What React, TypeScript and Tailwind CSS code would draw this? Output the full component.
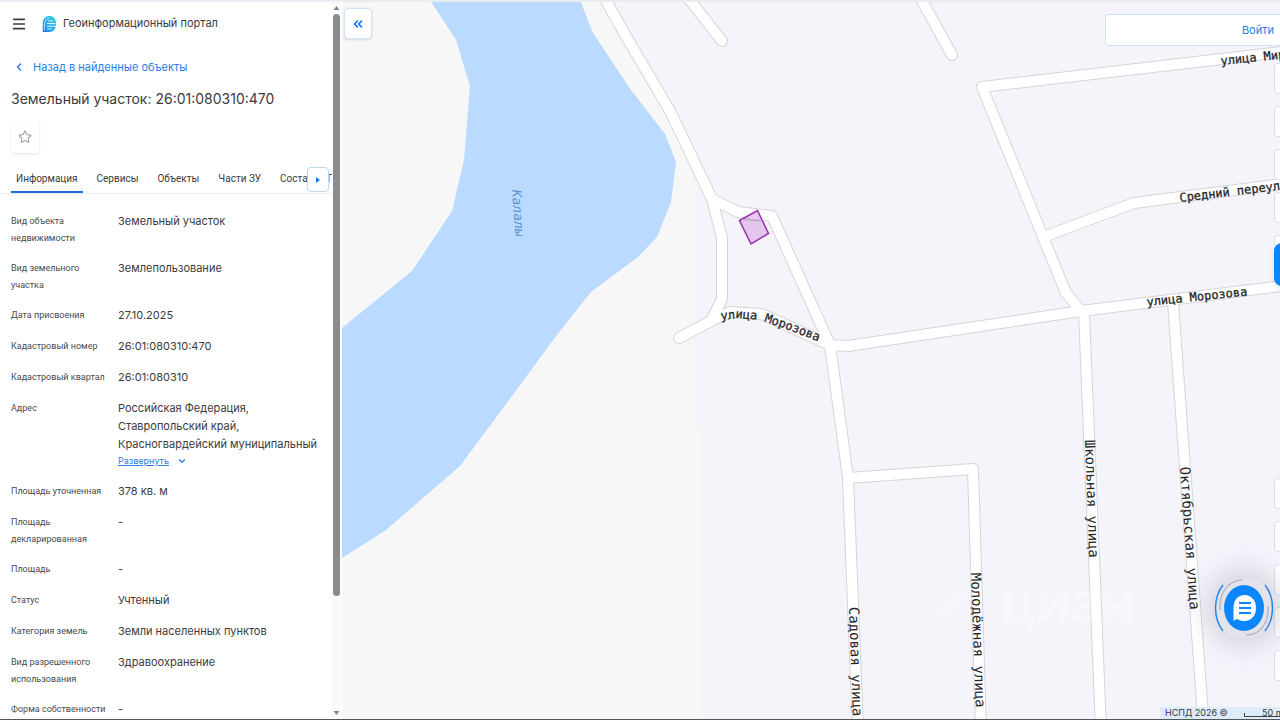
import { ChevronDown, ChevronLeft, ChevronsLeft, Menu, Star } from "lucide-react";

type Field = { label: string; value: string; expandable?: boolean };

const fields: Field[] = [
  { label: "Вид объекта недвижимости", value: "Земельный участок" },
  { label: "Вид земельного участка", value: "Землепользование" },
  { label: "Дата присвоения", value: "27.10.2025" },
  { label: "Кадастровый номер", value: "26:01:080310:470" },
  { label: "Кадастровый квартал", value: "26:01:080310" },
  {
    label: "Адрес",
    value: "Российская Федерация, Ставропольский край, Красногвардейский муниципальный",
    expandable: true,
  },
  { label: "Площадь уточненная", value: "378 кв. м" },
  { label: "Площадь декларированная", value: "-" },
  { label: "Площадь", value: "-" },
  { label: "Статус", value: "Учтенный" },
  { label: "Категория земель", value: "Земли населенных пунктов" },
  { label: "Вид разрешенного использования", value: "Здравоохранение" },
  { label: "Форма собственности", value: "-" },
];

const tabs = ["Информация", "Сервисы", "Объекты", "Части ЗУ", "Состав ЕЗП"];

const roads = [
  "M600 -10 L627 38 L670 111 L712 199 L738 212 L772 216 L830 345 L848 346 L1081 311 L1290 285",
  "M712 199 L722 238 V299 L711 321 L679 338",
  "M711 321 L730 312 L762 314 L830 345",
  "M685 -6 L722 41",
  "M916 -10 L952 55",
  "M1290 51 L982 87 L1043 237 L1066 293 L1081 311",
  "M1043 237 L1134 203 L1290 183",
  "M830 345 L848 478 L858 730",
  "M848 478 L973 469 L981 730",
  "M1084 312 L1101 730",
  "M1173 302 L1204 730",
];

function Logo() {
  return (
    <svg viewBox="0 0 16 18" className="h-4 w-4" aria-hidden="true">
      <defs>
        <linearGradient id="logo" x1="1" y1="0" x2="0" y2="1">
          <stop offset="0" stopColor="#35e0d6" />
          <stop offset="1" stopColor="#1479ff" />
        </linearGradient>
      </defs>
      <path d="M1 18 V8 C1 3 4.500 0 9 0 C13 0 16 3.500 16 9 C16 14.500 13 18 8 18 Z" fill="url(#logo)" />
      <path d="M3 16 V8.500 C3 5 5 3 8 2.500" fill="none" stroke="#ffffff" strokeWidth="0.800" />
      <path d="M6.500 5.500 H12 M5.500 8.500 H15 M5.500 11.500 H16 M6 14.500 H11" stroke="#ffffff" strokeWidth="1" />
    </svg>
  );
}

function MapCanvas() {
  return (
    <svg
      viewBox="342 2 938 717"
      preserveAspectRatio="xMinYMin slice"
      className="absolute inset-0 h-full w-full"
      role="img"
      aria-label="Карта"
    >
      <rect x="342" y="0" width="938" height="720" fill="#f5f4fb" />
      <path d="M342 0 H600 L627 38 L670 111 L693 170 V380 L700 440 V720 H342 Z" fill="#f7f7f7" />
      <path
        d="M430 0 L456 40 L470 86 L464 160 L452 211 L412 271 L342 328 V558 L386 530 L460 466 L512 396 L556 336 L591 292 L638 257 L657 237 L671 202 L676 162 L665 134 L628 86 L592 31 L580 0 Z"
        fill="#bbdaff"
      />
      <g fill="none" stroke="#d5d5d8" strokeWidth="12" strokeLinecap="round" strokeLinejoin="round">
        {roads.map((d) => (
          <path key={d} d={d} />
        ))}
      </g>
      <g fill="none" stroke="#ffffff" strokeWidth="10" strokeLinecap="round" strokeLinejoin="round">
        {roads.map((d) => (
          <path key={d} d={d} />
        ))}
      </g>
      <path
        d="M739.500 220.500 L757.500 210.500 L768.500 233.500 L751 244 Z"
        fill="#d08cdc"
        fillOpacity="0.45"
        stroke="#9b2fae"
        strokeWidth="1.500"
      />
      <path d="M742 219.500 L762 221" stroke="#b9a3c0" strokeWidth="1" />
      <defs>
        <path id="morozova-west" d="M721 320 L738 318 L760 320 L792 331 L840 350" />
      </defs>
      <g className="font-['DejaVu_Sans_Mono',monospace] text-[12px]" fill="#26262a" stroke="#26262a" strokeWidth="0.300">
        <text>
          <textPath href="#morozova-west">улица Морозова</textPath>
        </text>
        <text transform="translate(1147 306) rotate(-6)">улица Морозова</text>
        <text transform="translate(1180 202) rotate(-7)">Средний переулок</text>
        <text transform="translate(1221 65) rotate(-6)">улица Мира</text>
      </g>
      <g className="font-['DejaVu_Sans_Mono',monospace] text-[14px]" fill="#26262a">
        <text transform="translate(849 607) rotate(88)">Садовая улица</text>
        <text transform="translate(971 573) rotate(88)">Молодёжная улица</text>
        <text transform="translate(1085 440) rotate(88)">Школьная улица</text>
        <text transform="translate(1180 467) rotate(86)">Октябрьская улица</text>
      </g>
      <text
        transform="translate(512 190) rotate(86)"
        fill="#5c94d2"
        className="font-['DejaVu_Sans_Mono',monospace] text-[13px] italic"
      >
        Калалы
      </text>
      <g fill="#ffffff" fillOpacity="0.3">
        <path d="M936 618 L962 590 L970 590 L944 618 Z" />
        <text x="1000" y="622" className="font-['Inter',sans-serif] text-[56px] font-semibold">
          циан
        </text>
      </g>
    </svg>
  );
}

function ChatIcon() {
  return (
    <svg viewBox="0 0 60 60" className="h-[60px] w-[60px]" aria-hidden="true">
      <ellipse cx="30" cy="30" rx="20" ry="23" fill="#0a87ff" />
      <path
        d="M19.500 43 V30 C19.500 22 24 17 30.500 17 C37.500 17 42 22.500 42 30 C42 37.500 37.500 43 30.500 43 C28 43 26 42.500 24.500 41.500 C23 41 21 41.500 19.500 43 Z"
        fill="#ffffff"
      />
      <path d="M25 25 H37 M25 30 H37 M25 35 H37" stroke="#0a87ff" strokeWidth="2" />
      <g fill="none" strokeWidth="1.500">
        <path d="M9 7 C-1 20 -1 40 9 53 M51 7 C61 20 61 40 51 53" stroke="#2587ee" />
        <path d="M6 32 C5 14 14 3 28 2 M54 28 C55 46 46 57 32 57" stroke="#b9b9c0" />
      </g>
    </svg>
  );
}

function ToolButton({ label }: { label: string }) {
  return (
    <button type="button" aria-label={label} className="h-[31px] w-10 rounded-sm border border-[#cfe2f7] bg-white" />
  );
}

export default function App() {
  return (
    <div className="flex h-screen flex-col overflow-hidden border-t-2 border-b border-t-[#e9ecf0] border-b-[#55565a] bg-white font-['Inter',sans-serif] text-[#3b3b3d]">
      <div className="flex min-h-0 flex-1">
        <aside className="flex w-[342px] shrink-0 pr-px">
          <div className="flex min-w-0 flex-1 flex-col overflow-hidden">
            <header className="flex h-[43px] shrink-0 items-center pl-[11px]">
              <button type="button" aria-label="Меню">
                <Menu className="h-4 w-4" strokeWidth={2.5} />
              </button>
              <a href="#home" className="ml-3.5 flex items-center gap-1.5 text-[11px]">
                <Logo />
                Геоинформационный портал
              </a>
            </header>
            <a
              href="#results"
              className="mt-3 flex shrink-0 items-center gap-2 pl-[13px] text-[11px] leading-5 text-[#2a7de8]"
            >
              <ChevronLeft className="h-3 w-3" strokeWidth={3} />
              Назад в найденные объекты
            </a>
            <h1 className="mt-3 shrink-0 pl-[11px] text-[14px] leading-5">Земельный участок: 26:01:080310:470</h1>
            <button
              type="button"
              aria-label="В избранное"
              className="mt-3 ml-[11px] flex h-8 w-7 shrink-0 items-center justify-center rounded-sm text-[#a3a3a6] shadow-[0_1px_3px_rgba(0,0,0,0.12)]"
            >
              <Star className="h-3.5 w-3.5" strokeWidth={2} />
            </button>
            <div className="relative mt-2 shrink-0">
              <div
                role="tablist"
                className="flex h-[33px] gap-[9px] overflow-hidden border-b border-[#ececee] pl-[11px] font-['Roboto',sans-serif] text-[10px]"
              >
                {tabs.map((tab, i) => (
                  <button
                    key={tab}
                    type="button"
                    role="tab"
                    aria-selected={i === 0}
                    className={
                      i === 0
                        ? "shrink-0 border-b-2 border-[#1b6fd8] px-[5px] pt-1"
                        : "shrink-0 border-b-2 border-transparent px-[5px] pt-1"
                    }
                  >
                    {tab}
                  </button>
                ))}
              </div>
              <button
                type="button"
                aria-label="Следующие вкладки"
                className="absolute top-1.5 right-[3px] flex h-[25px] w-[22px] items-center justify-center rounded-sm border border-[#bcd7f5] bg-white"
              >
                <svg viewBox="0 0 4 6" className="h-1.5 w-1" aria-hidden="true">
                  <path d="M0 0 L4 3 L0 6 Z" fill="#1b77e6" />
                </svg>
              </button>
            </div>
            <dl className="mt-[18px] flex flex-col gap-3 pl-[11px]">
              {fields.map((f) => (
                <div key={f.label} className="flex shrink-0 gap-2">
                  <dt className="w-[99px] shrink-0 pt-px font-['Roboto',sans-serif] text-[9px] leading-[17px] text-[#4a4a4d]">
                    {f.label}
                  </dt>
                  <dd className="w-[205px] pb-px text-[11px] leading-[18px]">
                    {f.value}
                    {f.expandable && (
                      <button type="button" className="flex h-4 items-center gap-2 text-[9px] text-[#2a7de8]">
                        <span className="underline">Развернуть</span>
                        <ChevronDown className="h-2.5 w-2.5" strokeWidth={3} />
                      </button>
                    )}
                  </dd>
                </div>
              ))}
            </dl>
          </div>
          <div aria-hidden="true" className="flex w-[9px] shrink-0 flex-col items-center gap-1 bg-[#fafafa] py-1">
            <svg viewBox="0 0 6 4" className="h-1 w-[7px]">
              <path d="M0 4 L3 0 L6 4 Z" fill="#858585" />
            </svg>
            <div className="flex-1">
              <div className="h-[84%] w-[7px] rounded-full bg-[#8b8b8b]" />
            </div>
            <svg viewBox="0 0 6 4" className="h-1 w-[7px]">
              <path d="M0 0 L3 4 L6 0 Z" fill="#858585" />
            </svg>
          </div>
        </aside>

        <main className="relative min-w-0 flex-1 overflow-hidden bg-[#f5f4fb]">
          <MapCanvas />
          <button
            type="button"
            aria-label="Свернуть панель"
            className="absolute top-1.5 left-0.5 flex h-[31px] w-7 items-center justify-center rounded-sm border border-[#cfe2f7] bg-white text-[#1b77f2] shadow-sm"
          >
            <ChevronsLeft className="h-3.5 w-3.5" strokeWidth={3} />
          </button>
          <div className="absolute top-3 right-0 flex h-8 w-[175px] items-center justify-end rounded-l-sm border border-r-0 border-[#cfe2f7] bg-white pr-1.5">
            <a href="#login" className="text-[11px] text-[#2a7de8]">
              Войти
            </a>
          </div>
          <div className="absolute top-[61px] -right-[34px] flex flex-col gap-3">
            <ToolButton label="Поиск" />
            <ToolButton label="Слои" />
            <ToolButton label="Измерения" />
            <ToolButton label="Печать" />
            <ToolButton label="Экспорт" />
          </div>
          <button
            type="button"
            aria-label="Помощь"
            className="absolute top-[241px] -right-[34px] h-[43px] w-10 rounded-lg bg-[#0a87ff] shadow-md"
          />
          <div className="absolute -right-[34px] bottom-[38px] flex flex-col gap-3">
            <ToolButton label="Местоположение" />
            <ToolButton label="Приблизить" />
            <ToolButton label="Отдалить" />
            <ToolButton label="Вся карта" />
            <ToolButton label="Компас" />
          </div>
          <button
            type="button"
            aria-label="Открыть чат"
            className="absolute right-1.5 bottom-[81px] rounded-full bg-[#e4e3ea] shadow-[0_0_24px_10px_rgba(120,120,130,0.22)]"
          >
            <ChatIcon />
          </button>
          <footer className="absolute right-0 bottom-0 flex h-3 w-[120px] items-center justify-between bg-[#dcecfb] pl-[5px] text-[9px] leading-3">
            <span>НСПД 2026 ©</span>
            <span className="relative -mr-1 w-10 pl-[18px] whitespace-nowrap">
              50 m
              <span className="absolute bottom-0.5 left-0 h-1 w-full border-b border-l border-[#444]" />
            </span>
          </footer>
        </main>
      </div>
    </div>
  );
}
